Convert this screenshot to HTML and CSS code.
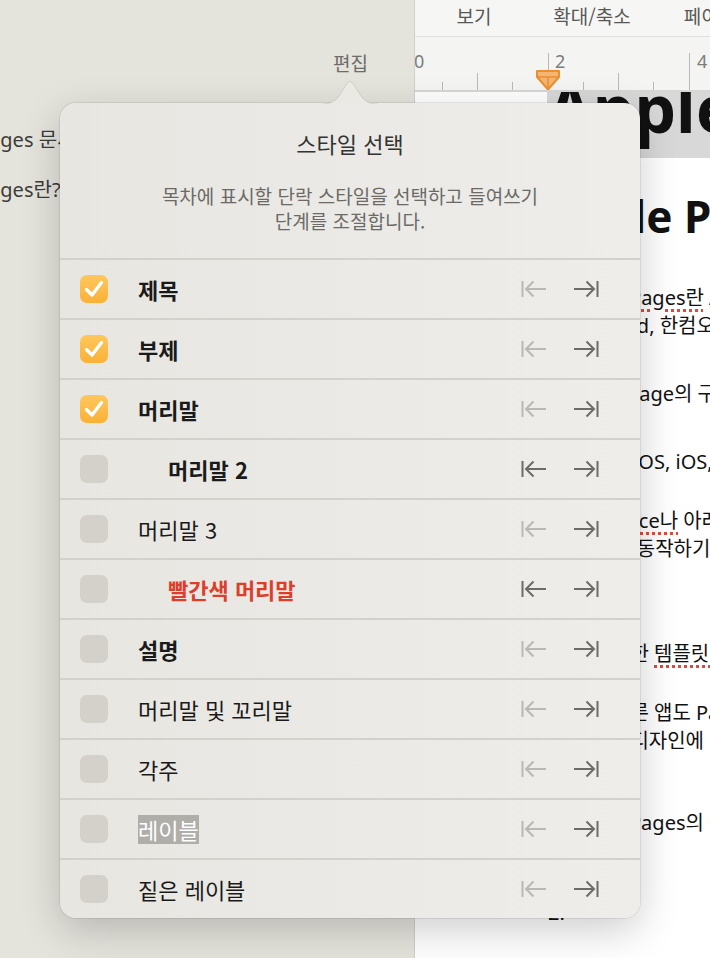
FILE: index.html
```html
<!DOCTYPE html>
<html lang="ko">
<head>
  <meta charset="UTF-8">
  <meta name="viewport" content="width=device-width, initial-scale=1.0">
  <title>스타일 선택</title>
  <link rel="stylesheet" href="styles.css">
</head>
<body>
  <svg class="icon-defs" width="0" height="0" aria-hidden="true">
    <symbol id="i-outdent" viewBox="0 0 25 18">
      <path d="M1.5 1v16M4.5 9H25M12.5 1.5 5 9l7.5 7.5" fill="none" stroke="currentColor" stroke-width="2"/>
    </symbol>
    <symbol id="i-indent" viewBox="0 0 25 18">
      <path d="M23.5 1v16M0 9h20.5M12.5 1.5 20 9l-7.5 7.5" fill="none" stroke="currentColor" stroke-width="2"/>
    </symbol>
    <symbol id="i-check" viewBox="0 0 28 28">
      <path d="M6.5 14.5 12 20 21.5 7.5" fill="none" stroke="#fff" stroke-width="3.4" stroke-linecap="round" stroke-linejoin="round"/>
    </symbol>
  </svg>

  <div class="app">
    <aside class="sidebar">
      <div class="sidebar-bar">
        <span class="edit-btn">편집</span>
      </div>
      <ul class="file-list">
        <li>Pages 문서 만들기</li>
        <li>Pages란?</li>
      </ul>
    </aside>

    <main class="editor">
      <nav class="menubar">
        <span class="menu-item">보기</span>
        <span class="menu-item">확대/축소</span>
        <span class="menu-item">페이지</span>
      </nav>

      <div class="ruler">
        <svg width="295" height="53">
          <g stroke="#b9b9b7" stroke-width="1">
            <path d="M133.5 16v37M274.5 16v37"/>
            <path d="M62.5 36v17M203.5 36v17"/>
            <path d="M27.5 45v8M97.5 45v8M168.5 45v8M238.5 45v8"/>
          </g>
          <g fill="#7c7c7a" font-family="Noto Sans, sans-serif" font-size="18">
            <text x="-1" y="31">0</text>
            <text x="140" y="31">2</text>
            <text x="282" y="31">4</text>
          </g>
          <path d="M122 34h22v6l-11 12.5L122 40z" fill="#f4b574" stroke="#ec8e2c" stroke-width="2" stroke-linejoin="round"/>
          <path d="M123 40h20M133 40v12" stroke="#ec8e2c" stroke-width="1.5"/>
        </svg>
      </div>

      <article class="page">
        <h1 class="doc-title">Apple Pages</h1>
        <h2 class="doc-heading">Apple Pages</h2>
        <ol class="doc-list">
          <li>
            <p>Apple <span class="spell">Pages란</span> Apple이 개발한 문서 작성 앱으로,<br>M. Word, 한컴오피스와 같은 워드 프로세서입니다.</p>
            <p>Homepage의 구성처럼 자유롭게 페이지를 배치할 수 있습니다.</p>
            <p>및&nbsp; macOS, iOS, iPadOS에서 모두 사용할 수 있습니다.</p>
            <p class="gap-sm">MS <span class="spell">Office나</span> 아래아한글과 달리 Apple 기기의<br>PC에서 동작하기 때문에 가볍고 빠릅니다.</p>
            <p class="gap-lg">또 다양한 <span class="spell">템플릿을</span> 제공합니다.</p>
            <p class="gap-sm">이외 다른 앱도 Pages로 열 수 있으며<br>세련된 디자인에 맞춰 문서를 꾸밀 수 있습니다.</p>
            <p class="gap-md">Apple Pages의 장점은 무료라는 것입니다.</p>
          </li>
          <li>
            <p><br></p>
          </li>
        </ol>
      </article>
    </main>
  </div>

  <section class="popover">
    <svg class="popover-arrow" width="56" height="24" viewBox="0 0 56 24">
      <path d="M0 24C10 24 15 20 19 13L25 3.5C26.5 1 29.5 1 31 3.5L37 13C41 20 46 24 56 24Z" fill="#eae9e4"/>
      <path d="M0 24C10 24 15 20 19 13L25 3.5C26.5 1 29.5 1 31 3.5L37 13C41 20 46 24 56 24" fill="none" stroke="rgba(0,0,0,0.09)" stroke-width="1"/>
    </svg>

    <header class="popover-header">
      <h3 class="popover-title">스타일 선택</h3>
      <p class="popover-desc">목차에 표시할 단락 스타일을 선택하고 들여쓰기 단계를 조절합니다.</p>
    </header>

    <ul class="style-list">
      <li class="style-row">
        <span class="check is-on"><svg><use href="#i-check"/></svg></span>
        <span class="style-name is-bold">제목</span>
        <span class="indent-tools">
          <svg class="tool is-off"><use href="#i-outdent"/></svg>
          <svg class="tool"><use href="#i-indent"/></svg>
        </span>
      </li>
      <li class="style-row">
        <span class="check is-on"><svg><use href="#i-check"/></svg></span>
        <span class="style-name is-bold">부제</span>
        <span class="indent-tools">
          <svg class="tool is-off"><use href="#i-outdent"/></svg>
          <svg class="tool"><use href="#i-indent"/></svg>
        </span>
      </li>
      <li class="style-row">
        <span class="check is-on"><svg><use href="#i-check"/></svg></span>
        <span class="style-name is-bold">머리말</span>
        <span class="indent-tools">
          <svg class="tool is-off"><use href="#i-outdent"/></svg>
          <svg class="tool"><use href="#i-indent"/></svg>
        </span>
      </li>
      <li class="style-row">
        <span class="check"></span>
        <span class="style-name is-bold is-sub">머리말 2</span>
        <span class="indent-tools">
          <svg class="tool"><use href="#i-outdent"/></svg>
          <svg class="tool"><use href="#i-indent"/></svg>
        </span>
      </li>
      <li class="style-row">
        <span class="check"></span>
        <span class="style-name">머리말 3</span>
        <span class="indent-tools">
          <svg class="tool is-off"><use href="#i-outdent"/></svg>
          <svg class="tool"><use href="#i-indent"/></svg>
        </span>
      </li>
      <li class="style-row">
        <span class="check"></span>
        <span class="style-name is-bold is-sub is-red">빨간색 머리말</span>
        <span class="indent-tools">
          <svg class="tool"><use href="#i-outdent"/></svg>
          <svg class="tool"><use href="#i-indent"/></svg>
        </span>
      </li>
      <li class="style-row">
        <span class="check"></span>
        <span class="style-name is-bold">설명</span>
        <span class="indent-tools">
          <svg class="tool is-off"><use href="#i-outdent"/></svg>
          <svg class="tool"><use href="#i-indent"/></svg>
        </span>
      </li>
      <li class="style-row">
        <span class="check"></span>
        <span class="style-name">머리말 및 꼬리말</span>
        <span class="indent-tools">
          <svg class="tool is-off"><use href="#i-outdent"/></svg>
          <svg class="tool"><use href="#i-indent"/></svg>
        </span>
      </li>
      <li class="style-row">
        <span class="check"></span>
        <span class="style-name">각주</span>
        <span class="indent-tools">
          <svg class="tool is-off"><use href="#i-outdent"/></svg>
          <svg class="tool"><use href="#i-indent"/></svg>
        </span>
      </li>
      <li class="style-row">
        <span class="check"></span>
        <span class="style-name is-selected">레이블</span>
        <span class="indent-tools">
          <svg class="tool is-off"><use href="#i-outdent"/></svg>
          <svg class="tool"><use href="#i-indent"/></svg>
        </span>
      </li>
      <li class="style-row">
        <span class="check"></span>
        <span class="style-name">짙은 레이블</span>
        <span class="indent-tools">
          <svg class="tool is-off"><use href="#i-outdent"/></svg>
          <svg class="tool"><use href="#i-indent"/></svg>
        </span>
      </li>
    </ul>
  </section>
</body>
</html>
```

FILE: styles.css
```css
* {
  box-sizing: border-box;
  margin: 0;
  padding: 0;
}

html, body {
  height: 100%;
}

body {
  position: relative;
  width: 710px;
  height: 958px;
  overflow: hidden;
  background: #e4e3dc;
  font-family: "Noto Sans CJK KR", "Noto Sans", sans-serif;
  -webkit-font-smoothing: antialiased;
}

.icon-defs {
  position: absolute;
  width: 0;
  height: 0;
  overflow: hidden;
}

.app {
  display: flex;
  height: 958px;
}

/* Sidebar */
.sidebar {
  width: 415px;
  flex-shrink: 0;
  background: #e4e3dc;
  border-right: 1px solid #d1d0ca;
  overflow: hidden;
}

.sidebar-bar {
  height: 90px;
  display: flex;
  align-items: flex-end;
  justify-content: flex-end;
  padding: 0 46px 14px 0;
}

.edit-btn {
  font-size: 19px;
  line-height: 26px;
  color: #6e6d69;
}

.file-list {
  list-style: none;
  padding-top: 25px;
  margin-left: -23px;
  white-space: nowrap;
}

.file-list li {
  font-family: "Noto Sans", "Noto Sans CJK KR", sans-serif;
  font-size: 20px;
  line-height: 50px;
  color: #3c3c3a;
}

/* Editor */
.editor {
  flex: 1;
  min-width: 0;
  display: flex;
  flex-direction: column;
  background: #fff;
}

.menubar {
  height: 37px;
  display: flex;
  background: #f6f6f4;
  border-bottom: 1px solid #e0e0de;
  overflow: hidden;
}

.menu-item {
  width: 118px;
  flex-shrink: 0;
  text-align: center;
  font-size: 19px;
  line-height: 32px;
  color: #575755;
  white-space: nowrap;
}

.ruler {
  height: 55px;
  background: #f4f4f2;
  border-bottom: 2px solid #d7d7d5;
}

.ruler svg {
  display: block;
}

.page {
  flex: 1;
  overflow: hidden;
  padding-left: 132px;
  background: #fff;
  color: #111;
  font-family: "Noto Sans", "Noto Sans CJK KR", sans-serif;
  white-space: nowrap;
}

.doc-title {
  margin-top: -35px;
  font-size: 66px;
  font-weight: 700;
  line-height: 101px;
  background: #d8d8d8;
}

.doc-heading {
  margin-top: 28px;
  font-size: 44px;
  font-weight: 700;
  line-height: 60px;
}

.doc-list {
  margin-top: 38px;
  padding-left: 23px;
  font-size: 20px;
  line-height: 28px;
}

.doc-list li + li {
  margin-top: 62px;
}

.doc-list p + p {
  margin-top: 40px;
}

.doc-list p.gap-sm {
  margin-top: 31px;
}

.doc-list p.gap-md {
  margin-top: 54px;
}

.doc-list p.gap-lg {
  margin-top: 77px;
}

.spell {
  text-decoration: underline dotted #e2483a;
  text-decoration-thickness: 3px;
  text-underline-offset: 4px;
}

/* Popover */
.popover {
  position: absolute;
  left: 60px;
  top: 103px;
  width: 580px;
  border-radius: 16px;
  background: linear-gradient(90deg, #e8e6e1 0%, #eeedea 100%);
  box-shadow: 0 0 0 1px rgba(0, 0, 0, 0.07), 0 12px 40px rgba(0, 0, 0, 0.2);
}

.popover-arrow {
  position: absolute;
  left: 262px;
  top: -23px;
}

.popover-header {
  padding: 26px 40px 25px;
  text-align: center;
}

.popover-title {
  font-size: 22px;
  font-weight: 400;
  line-height: 28px;
  color: #333331;
}

.popover-desc {
  max-width: 400px;
  margin: 26px auto 0;
  font-size: 19px;
  line-height: 25px;
  color: #6b6a67;
  word-break: keep-all;
}

.style-list {
  list-style: none;
}

.style-row {
  display: flex;
  align-items: center;
  height: 60px;
  padding: 0 41px 0 20px;
  border-top: 2px solid #d3d1cc;
}

.check {
  display: flex;
  width: 28px;
  height: 28px;
  flex-shrink: 0;
  border-radius: 7px;
  background: #d4d1ca;
}

.check svg {
  width: 28px;
  height: 28px;
}

.check.is-on {
  background: linear-gradient(180deg, #ffc75a 0%, #f9b138 100%);
}

.style-name {
  margin-left: 30px;
  font-size: 22px;
  line-height: 29px;
  color: #1a1a1a;
  white-space: nowrap;
}

.style-name.is-sub {
  margin-left: 60px;
}

.style-name.is-bold {
  font-weight: 700;
}

.style-name.is-red {
  color: #dc3e2c;
}

.style-name.is-selected {
  background: #afaea9;
  color: #fff;
}

.indent-tools {
  display: flex;
  gap: 28px;
  margin-left: auto;
  color: #6c6c6a;
}

.tool {
  width: 25px;
  height: 18px;
}

.tool.is-off {
  color: #b9b8b4;
}
```
